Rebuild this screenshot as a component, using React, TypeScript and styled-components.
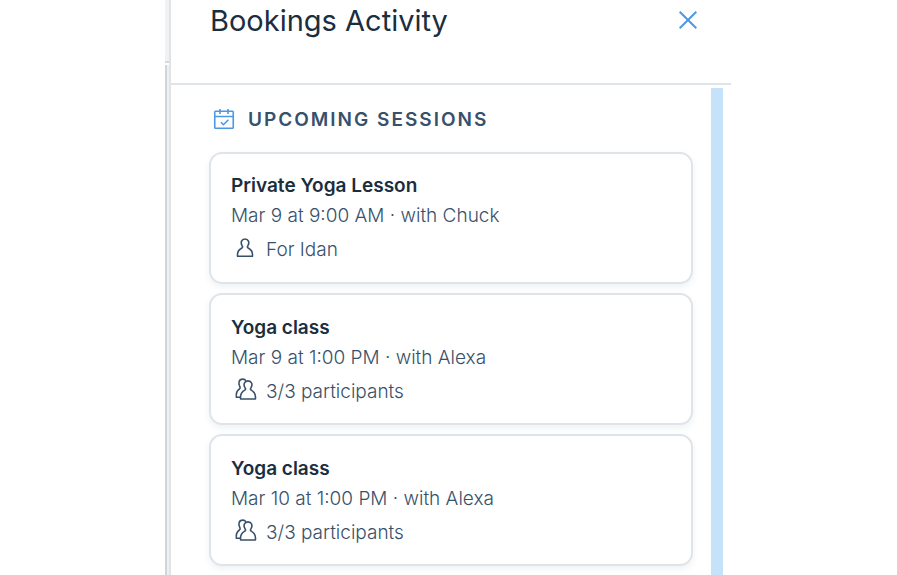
import React from 'react';
import styled, { createGlobalStyle } from 'styled-components';

const color = {
  ink: '#1a2e40',
  text: '#37516a',
  line: '#dfe4e9',
  blue: '#4d97e6',
  paleBlue: '#c6e1fa',
};

const GlobalStyle = createGlobalStyle`
  *, *::before, *::after { box-sizing: border-box; }
  body {
    margin: 0;
    background: #fff;
    color: ${color.text};
    font-family: Inter, "Noto Sans", sans-serif;
    font-size: 19px;
    line-height: 30px;
  }
`;

const Page = styled.div`
  display: flex;
  width: 100%;
  max-width: 567px;
  height: 100vh;
  margin: 0 auto;
  overflow: hidden;
`;

const Gutter = styled.div`
  display: flex;
  flex: 0 0 4px;
  flex-direction: column;
`;

const GutterTop = styled.div`
  flex: 0 0 63px;
  background: #f2f2f2;
  border-bottom: 2px solid #d5d9dc;
`;

const GutterTrack = styled.div`
  flex: 1;
  margin-top: 2px;
  background: #f0f0f0;
  border-left: 2px solid #d0d5d9;
`;

const Panel = styled.aside`
  display: flex;
  flex: 1;
  flex-direction: column;
  min-width: 0;
  margin-right: 1px;
  border-left: 2px solid ${color.line};
`;

const Header = styled.header`
  display: flex;
  align-items: center;
  justify-content: space-between;
  padding: 0 33px 41px 39px;
  border-bottom: 2px solid ${color.line};
`;

const Title = styled.h1`
  margin: 0;
  color: ${color.ink};
  font-size: 29px;
  font-weight: 400;
  line-height: 42px;
`;

const CloseButton = styled.button`
  display: flex;
  padding: 0;
  border: 0;
  background: none;
  color: ${color.blue};
  cursor: pointer;
`;

const Body = styled.div`
  display: flex;
  flex: 1;
  gap: 18px;
  min-height: 0;
  padding: 0 8px 0 38px;
`;

const Section = styled.section`
  flex: 1;
  min-width: 0;
  padding-top: 23px;
`;

const SectionHeading = styled.h2`
  display: flex;
  align-items: center;
  gap: 12px;
  margin: 0 0 20px 3px;
  color: ${color.text};
  font-size: 19px;
  font-weight: 600;
  line-height: 24px;
  letter-spacing: 2px;
  text-transform: uppercase;

  svg { flex: none; color: ${color.blue}; }
`;

const SessionList = styled.ul`
  display: grid;
  gap: 9px;
  margin: 0;
  padding: 0;
  list-style: none;
`;

const Card = styled.li<{ $group: boolean }>`
  padding: ${p => (p.$group ? '18px 20px 14px' : '17px 20px 15px')};
  border: 2px solid ${color.line};
  border-radius: 13px;
  box-shadow: 0 3px 6px rgba(40, 80, 120, 0.08);
`;

const SessionName = styled.h3`
  margin: 0;
  color: ${color.ink};
  font-size: 19px;
  font-weight: 600;
`;

const SessionTime = styled.p`
  margin: 0 0 2px;
  font-weight: 300;
`;

const Attendance = styled.p`
  display: flex;
  align-items: center;
  gap: 9px;
  margin: 0 0 0 2px;
  font-weight: 300;
  line-height: 34px;

  svg { flex: none; overflow: visible; }
`;

const ScrollThumb = styled.div`
  flex: 0 0 12px;
  margin-top: 3px;
  background: ${color.paleBlue};
`;

const CloseIcon = () => (
  <svg width="20" height="20" viewBox="0 1 20 20" fill="none" stroke="currentColor" strokeWidth="2" aria-hidden="true">
    <path d="M1.7 1.7 18.3 18.3M18.3 1.7 1.7 18.3" />
  </svg>
);

const CalendarIcon = () => (
  <svg width="24" height="24" viewBox="0 1 24 24" fill="none" stroke="currentColor" strokeWidth="1.6" aria-hidden="true">
    <rect x="2.75" y="4.25" width="18.5" height="17" rx="0.8" />
    <path d="M2.75 9.5h18.5M8 2v5M16 2v5M9 15.3l2.4 2.4 5-5" />
  </svg>
);

const PersonIcon = () => (
  <svg width="24" height="24" viewBox="0 1 24 24" fill="none" stroke="currentColor" strokeWidth="1.6" strokeLinejoin="round" aria-hidden="true">
    <path d="M4.6 19.3C4 15.3 5.4 12.8 8.8 11c1.1-.6.9-1.3.4-2.1C7.1 5.2 8.6 2 12 2s4.9 3.2 2.8 6.9c-.5.8-.7 1.5.4 2.1 3.4 1.8 4.8 4.3 4.2 8.3z" />
  </svg>
);

const PeopleIcon = () => (
  <svg width="24" height="24" viewBox="0 2 24 24" fill="none" stroke="currentColor" strokeWidth="1.6" strokeLinejoin="round" aria-hidden="true">
    <path d="M7.6 21C7 16.6 8.4 14 11.7 12.1c1.1-.6.9-1.4.4-2.2-2.2-3.7-.6-7 2.9-7s5.1 3.3 2.9 7c-.5.8-.7 1.6.4 2.2 3.3 1.9 4.7 4.5 4.1 8.9z" />
    <path d="M7.6 19.3H3.4c-.6-4.2.3-6.5 3-8.3 1.1-.6.9-1.3.5-2.1C4.8 4.7 6.1 1.1 9.7 1.1c1.5 0 2.6.6 3.2 1.8" />
  </svg>
);

interface Session {
  name: string;
  time: string;
  attendance: string;
  group: boolean;
}

const sessions: Session[] = [
  { name: 'Private Yoga Lesson', time: 'Mar 9 at 9:00 AM · with Chuck', attendance: 'For Idan', group: false },
  { name: 'Yoga class', time: 'Mar 9 at 1:00 PM · with Alexa', attendance: '3/3 participants', group: true },
  { name: 'Yoga class', time: 'Mar 10 at 1:00 PM · with Alexa', attendance: '3/3 participants', group: true },
];

export default function App() {
  return (
    <>
      <GlobalStyle />
      <Page>
        <Gutter>
          <GutterTop />
          <GutterTrack />
        </Gutter>
        <Panel>
          <Header>
            <Title>Bookings Activity</Title>
            <CloseButton type="button" aria-label="Close">
              <CloseIcon />
            </CloseButton>
          </Header>
          <Body>
            <Section>
              <SectionHeading>
                <CalendarIcon />
                Upcoming Sessions
              </SectionHeading>
              <SessionList>
                {sessions.map(s => (
                  <Card key={s.time} $group={s.group}>
                    <SessionName>{s.name}</SessionName>
                    <SessionTime>{s.time}</SessionTime>
                    <Attendance>
                      {s.group ? <PeopleIcon /> : <PersonIcon />}
                      {s.attendance}
                    </Attendance>
                  </Card>
                ))}
              </SessionList>
            </Section>
            <ScrollThumb />
          </Body>
        </Panel>
      </Page>
    </>
  );
}
